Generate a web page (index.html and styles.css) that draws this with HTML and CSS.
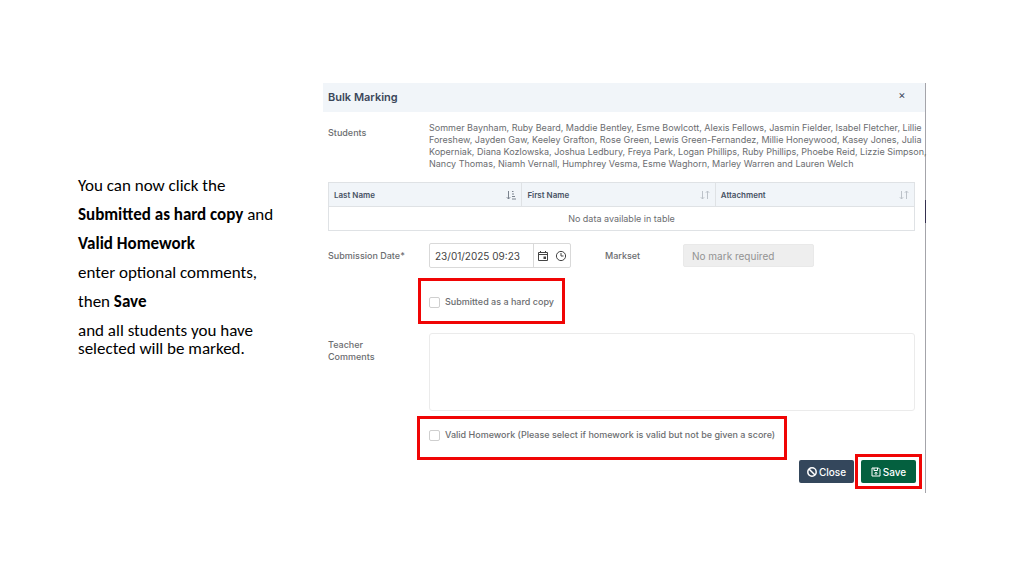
FILE: index.html
```html
<!DOCTYPE html>
<html lang="en">
<head>
    <meta charset="UTF-8">
    <meta name="viewport" content="width=device-width, initial-scale=1.0">
    <title>Bulk Marking</title>
    <link rel="stylesheet" href="styles.css">
</head>
<body>
    <main class="slide">
        <section class="notes">
            <p>You can now click the</p>
            <p><strong>Submitted as hard copy</strong> and</p>
            <p><strong>Valid Homework</strong></p>
            <p>enter optional comments,</p>
            <p>then <strong>Save</strong></p>
            <p>and all students you have selected will be marked.</p>
        </section>

        <form class="dialog">
            <header class="dialog-header">
                <h1>Bulk Marking</h1>
                <button type="button" class="dismiss" aria-label="Dismiss">×</button>
            </header>

            <div class="row students">
                <span class="label">Students</span>
                <p>Sommer Baynham, Ruby Beard, Maddie Bentley, Esme Bowlcott, Alexis Fellows, Jasmin Fielder, Isabel Fletcher, Lillie<br>
                Foreshew, Jayden Gaw, Keeley Grafton, Rose Green, Lewis Green-Fernandez, Millie Honeywood, Kasey Jones, Julia<br>
                Koperniak, Diana Kozlowska, Joshua Ledbury, Freya Park, Logan Phillips, Ruby Phillips, Phoebe Reid, Lizzie Simpson,<br>
                Nancy Thomas, Niamh Vernall, Humphrey Vesma, Esme Waghorn, Marley Warren and Lauren Welch</p>
            </div>

            <table class="files">
                <thead>
                    <tr>
                        <th><div class="th">Last Name
                            <svg class="sort active" viewBox="0 0 10 10"><path d="M2.5 1v8M.8 7.2 2.5 9l1.7-1.8M6 1.5h1.5M6 4h2M6 6.5h3M6 9h4"/></svg>
                        </div></th>
                        <th><div class="th">First Name
                            <svg class="sort" viewBox="0 0 10 10"><path d="M2.5 1v8M.8 7.2 2.5 9l1.7-1.8M7.5 9V1M5.8 2.8 7.5 1l1.7 1.8"/></svg>
                        </div></th>
                        <th><div class="th">Attachment
                            <svg class="sort" viewBox="0 0 10 10"><path d="M2.5 1v8M.8 7.2 2.5 9l1.7-1.8M7.5 9V1M5.8 2.8 7.5 1l1.7 1.8"/></svg>
                        </div></th>
                    </tr>
                </thead>
                <tbody>
                    <tr><td colspan="3">No data available in table</td></tr>
                </tbody>
            </table>

            <div class="row submission">
                <label class="label" for="date">Submission Date*</label>
                <div class="date-group">
                    <input type="text" id="date" value="23/01/2025 09:23">
                    <button type="button" aria-label="Pick date">
                        <svg viewBox="0 0 12 12"><path d="M1.5 2.5h9v8h-9zM1.5 4.5h9M3.5 1v2M8.5 1v2"/><path class="solid" d="M6.5 6.5h2.5v2.5H6.5z"/></svg>
                    </button>
                    <button type="button" aria-label="Pick time">
                        <svg viewBox="0 0 12 12"><circle cx="6" cy="6" r="4.6"/><path d="M6 3v3h2.5"/></svg>
                    </button>
                </div>
                <label class="label markset-label" for="markset">Markset</label>
                <input type="text" id="markset" class="markset" value="No mark required" disabled>
            </div>

            <div class="highlight hard-copy">
                <label><input type="checkbox"> Submitted as a hard copy</label>
            </div>

            <div class="row comments">
                <label class="label" for="comments">Teacher Comments</label>
                <textarea id="comments"></textarea>
            </div>

            <div class="highlight valid">
                <label><input type="checkbox"> Valid Homework (Please select if homework is valid but not be given a score)</label>
            </div>

            <footer class="actions">
                <button type="button" class="btn close">
                    <svg viewBox="0 0 10 10"><circle cx="5" cy="5" r="4.2"/><path d="m2 2 6 6"/></svg>Close
                </button>
                <div class="highlight save-box">
                    <button type="submit" class="btn save">
                        <svg viewBox="0 0 10 10"><path d="M1 1h6.5L9 2.5V9H1zM3 1v2.5h3.5V1"/><circle cx="5" cy="6.3" r="1"/></svg>Save
                    </button>
                </div>
            </footer>
        </form>
    </main>
</body>
</html>
```
FILE: styles.css
```css
* {
    box-sizing: border-box;
}
body {
    margin: 0;
    background: #fff;
    color: #6b6d70;
    font-family: Inter, "Liberation Sans", sans-serif;
    font-size: 9px;
    line-height: 12px;
}
p, h1 {
    margin: 0;
}
button, input, textarea {
    font: inherit;
    color: inherit;
}
svg {
    fill: none;
    stroke: currentColor;
}
.slide {
    display: flex;
    align-items: flex-start;
    padding: 83px 98px 83px 78px;
}

/* instructions */
.notes {
    flex: 0 0 245px;
    padding: 94px 40px 0 0;
    color: #000;
    font-family: Carlito, Lato, sans-serif;
    font-size: 17px;
    line-height: 18px;
}
.notes p {
    margin-bottom: 11px;
}

/* dialog */
.dialog {
    position: relative;
    flex: 1;
    min-width: 0;
    padding-bottom: 10px;
    border-right: 1px solid #a4a4aa;
}
.dialog::after {
    content: "";
    position: absolute;
    top: 117px;
    right: -1px;
    width: 1px;
    height: 23px;
    background: #35304f;
}
.dialog-header {
    display: flex;
    align-items: center;
    justify-content: space-between;
    height: 29px;
    padding: 0 18px 2px 5px;
    background: #f1f5f9;
    color: #3b4759;
}
.dialog-header h1 {
    font-size: 11px;
    font-weight: 600;
}
.dismiss {
    width: 10px;
    padding: 0 0 4px;
    border: 0;
    background: none;
    font-size: 11px;
}
.row {
    display: flex;
    margin: 0 10px 0 5px;
}
.label {
    flex: 0 0 101px;
    font-weight: 500;
}
.students {
    padding: 10px 0 12px;
}
.students .label {
    padding-top: 5px;
}
.students p {
    flex: 1;
    min-width: 0;
    white-space: nowrap;
}

/* table */
.files {
    width: calc(100% - 15px);
    margin-left: 5px;
    border: 1px solid #dfe2e5;
    border-collapse: collapse;
    table-layout: fixed;
}
.files th {
    height: 24px;
    padding: 0 5px;
    border: 1px solid #dfe2e5;
    background: #f1f5f9;
    color: #475264;
    font-size: 8px;
    font-weight: 600;
    text-align: left;
}
.files th:nth-child(-n+2) {
    width: 33%;
}
.files td {
    height: 24px;
    padding: 0;
    text-align: center;
}
.th {
    display: flex;
    align-items: center;
    justify-content: space-between;
}
.sort {
    width: 10px;
    height: 10px;
    color: #bcc2c9;
}
.sort.active {
    color: #7b838e;
}

/* submission */
.submission {
    align-items: center;
    margin-top: 12px;
}
.date-group {
    display: flex;
    width: 142px;
    height: 25px;
    border: 1px solid #d9d9d9;
    border-radius: 2px;
    color: #444;
}
.date-group input {
    width: 104px;
    padding: 0 5px;
    border: 0;
    border-right: 1px solid #d9d9d9;
    background: none;
    font-size: 10px;
}
.date-group button {
    flex: 1;
    padding: 0;
    border: 0;
    background: none;
}
.date-group svg {
    display: block;
    width: 12px;
    height: 12px;
    margin: 0 auto;
}
.solid {
    fill: currentColor;
    stroke: none;
}
.markset-label {
    flex-basis: 78px;
    margin-left: 34px;
}
.markset {
    width: 131px;
    height: 23px;
    padding: 0 8px;
    border: 1px solid #e9e9e9;
    border-radius: 2px;
    background: #eee;
    color: #929292;
    font-size: 10px;
}

/* controls picked out in red */
.highlight {
    display: flex;
    align-items: center;
    width: fit-content;
    border: 3px solid #f00505;
    font-weight: 500;
}
.highlight label {
    display: flex;
    align-items: center;
    gap: 5px;
}
.highlight input {
    appearance: none;
    width: 11px;
    height: 11px;
    margin: 0;
    border: 1px solid #cfcfcf;
    border-radius: 2px;
    background: #fff;
}
.hard-copy {
    height: 46px;
    margin: 10px 0 9px 95px;
    padding: 2px 8px 0 8px;
}
.valid {
    height: 44px;
    margin: 5px 0 0 94px;
    padding: 0 9px 6px 9px;
}
.comments .label {
    padding: 6px 40px 0 0;
}
.comments textarea {
    flex: 1;
    height: 78px;
    padding: 4px;
    border: 1px solid #ebebeb;
    border-radius: 3px;
    resize: none;
}

/* buttons */
.actions {
    display: flex;
    justify-content: flex-end;
    gap: 7px;
    margin-right: 9px;
}
.btn {
    display: flex;
    align-items: center;
    justify-content: center;
    gap: 2px;
    width: 55px;
    height: 23px;
    padding: 0;
    border: 0;
    border-radius: 2px;
    color: #fff;
    font-size: 10px;
    font-weight: 500;
}
.btn svg {
    width: 10px;
    height: 10px;
}
.close {
    background: #34475c;
}
.close svg {
    stroke-width: 1.5;
}
.save-box {
    margin: -6px;
    padding: 3px;
}
.save {
    background: #04603f;
}
```
